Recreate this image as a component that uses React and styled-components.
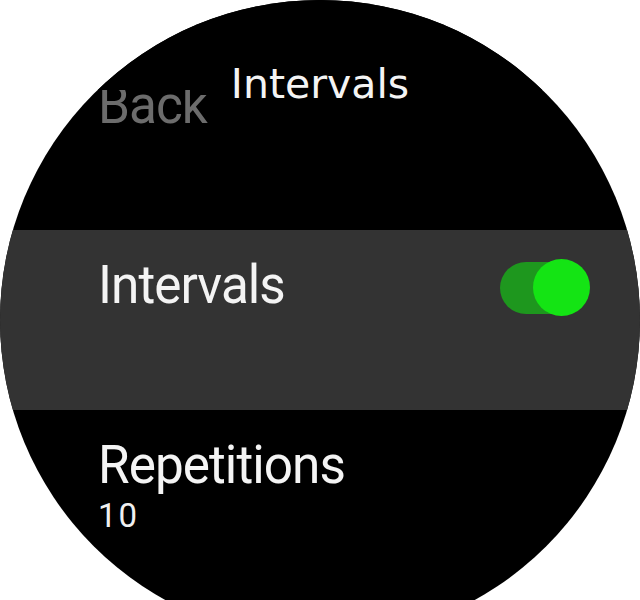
import React from 'react';
import styled, { createGlobalStyle } from 'styled-components';

const GlobalStyle = createGlobalStyle`
  html, body {
    margin: 0;
    padding: 0;
    background: #fff;
    overflow: hidden;
  }
`;

const Watch = styled.div`
  position: relative;
  width: 640px;
  height: 640px;
  border-radius: 50%;
  background: #000;
  overflow: hidden;
`;

const Header = styled.div`
  position: absolute;
  top: 0;
  left: 0;
  right: 0;
  height: 90px;
  box-sizing: border-box;
  padding-top: 64px;
  background: #000;
  z-index: 2;
`;

const Title = styled.div`
  font-family: 'DejaVu Sans', sans-serif;
  font-size: 41px;
  line-height: 41px;
  color: #f4f4f4;
  text-align: center;
`;

const List = styled.div`
  display: flex;
  flex-direction: column;
  padding-top: 50px;
`;

const Row = styled.div`
  display: flex;
  justify-content: space-between;
  align-items: flex-start;
  height: 180px;
  box-sizing: border-box;
  padding: 28px 50px 0 98px;
  background: ${({ $active }) => ($active ? '#333333' : 'transparent')};
`;

const Texts = styled.div`
  display: flex;
  flex-direction: column;
  gap: 8px;
`;

// the watch face font is condensed, roboto gets squeezed a little
const Label = styled.div`
  font-family: Roboto, sans-serif;
  font-size: 54px;
  line-height: 54px;
  letter-spacing: -1px;
  transform: scaleX(0.95);
  transform-origin: left center;
  color: ${({ $dim }) => ($dim ? '#6c6c6c' : '#f4f4f4')};
`;

const Value = styled.div`
  font-family: Roboto, sans-serif;
  font-size: 33px;
  line-height: 32px;
  letter-spacing: 2px;
  color: #f0f0f0;
`;

const Toggle = styled.div`
  position: relative;
  width: 90px;
  height: 57px;
  margin-top: 1px;
`;

const Track = styled.div`
  position: absolute;
  left: 0;
  top: 3px;
  width: 86px;
  height: 52px;
  border-radius: 26px;
  background: ${({ $on }) => ($on ? '#1e971e' : '#555')};
`;

const Knob = styled.div`
  position: absolute;
  top: 0;
  left: ${({ $on }) => ($on ? '33px' : '0')};
  width: 57px;
  height: 57px;
  border-radius: 50%;
  background: ${({ $on }) => ($on ? '#14e414' : '#aaa')};
`;

const items = [
  { label: 'Back', dim: true },
  { label: 'Intervals', active: true, toggle: true },
  { label: 'Repetitions', value: '10' },
];

export default function App() {
  return (
    <>
      <GlobalStyle />
      <Watch>
        <Header>
          <Title>Intervals</Title>
        </Header>
        <List>
          {items.map(item => (
            <Row key={item.label} $active={item.active}>
              <Texts>
                <Label $dim={item.dim}>{item.label}</Label>
                {item.value && <Value>{item.value}</Value>}
              </Texts>
              {item.toggle && (
                <Toggle>
                  <Track $on />
                  <Knob $on />
                </Toggle>
              )}
            </Row>
          ))}
        </List>
      </Watch>
    </>
  );
}
